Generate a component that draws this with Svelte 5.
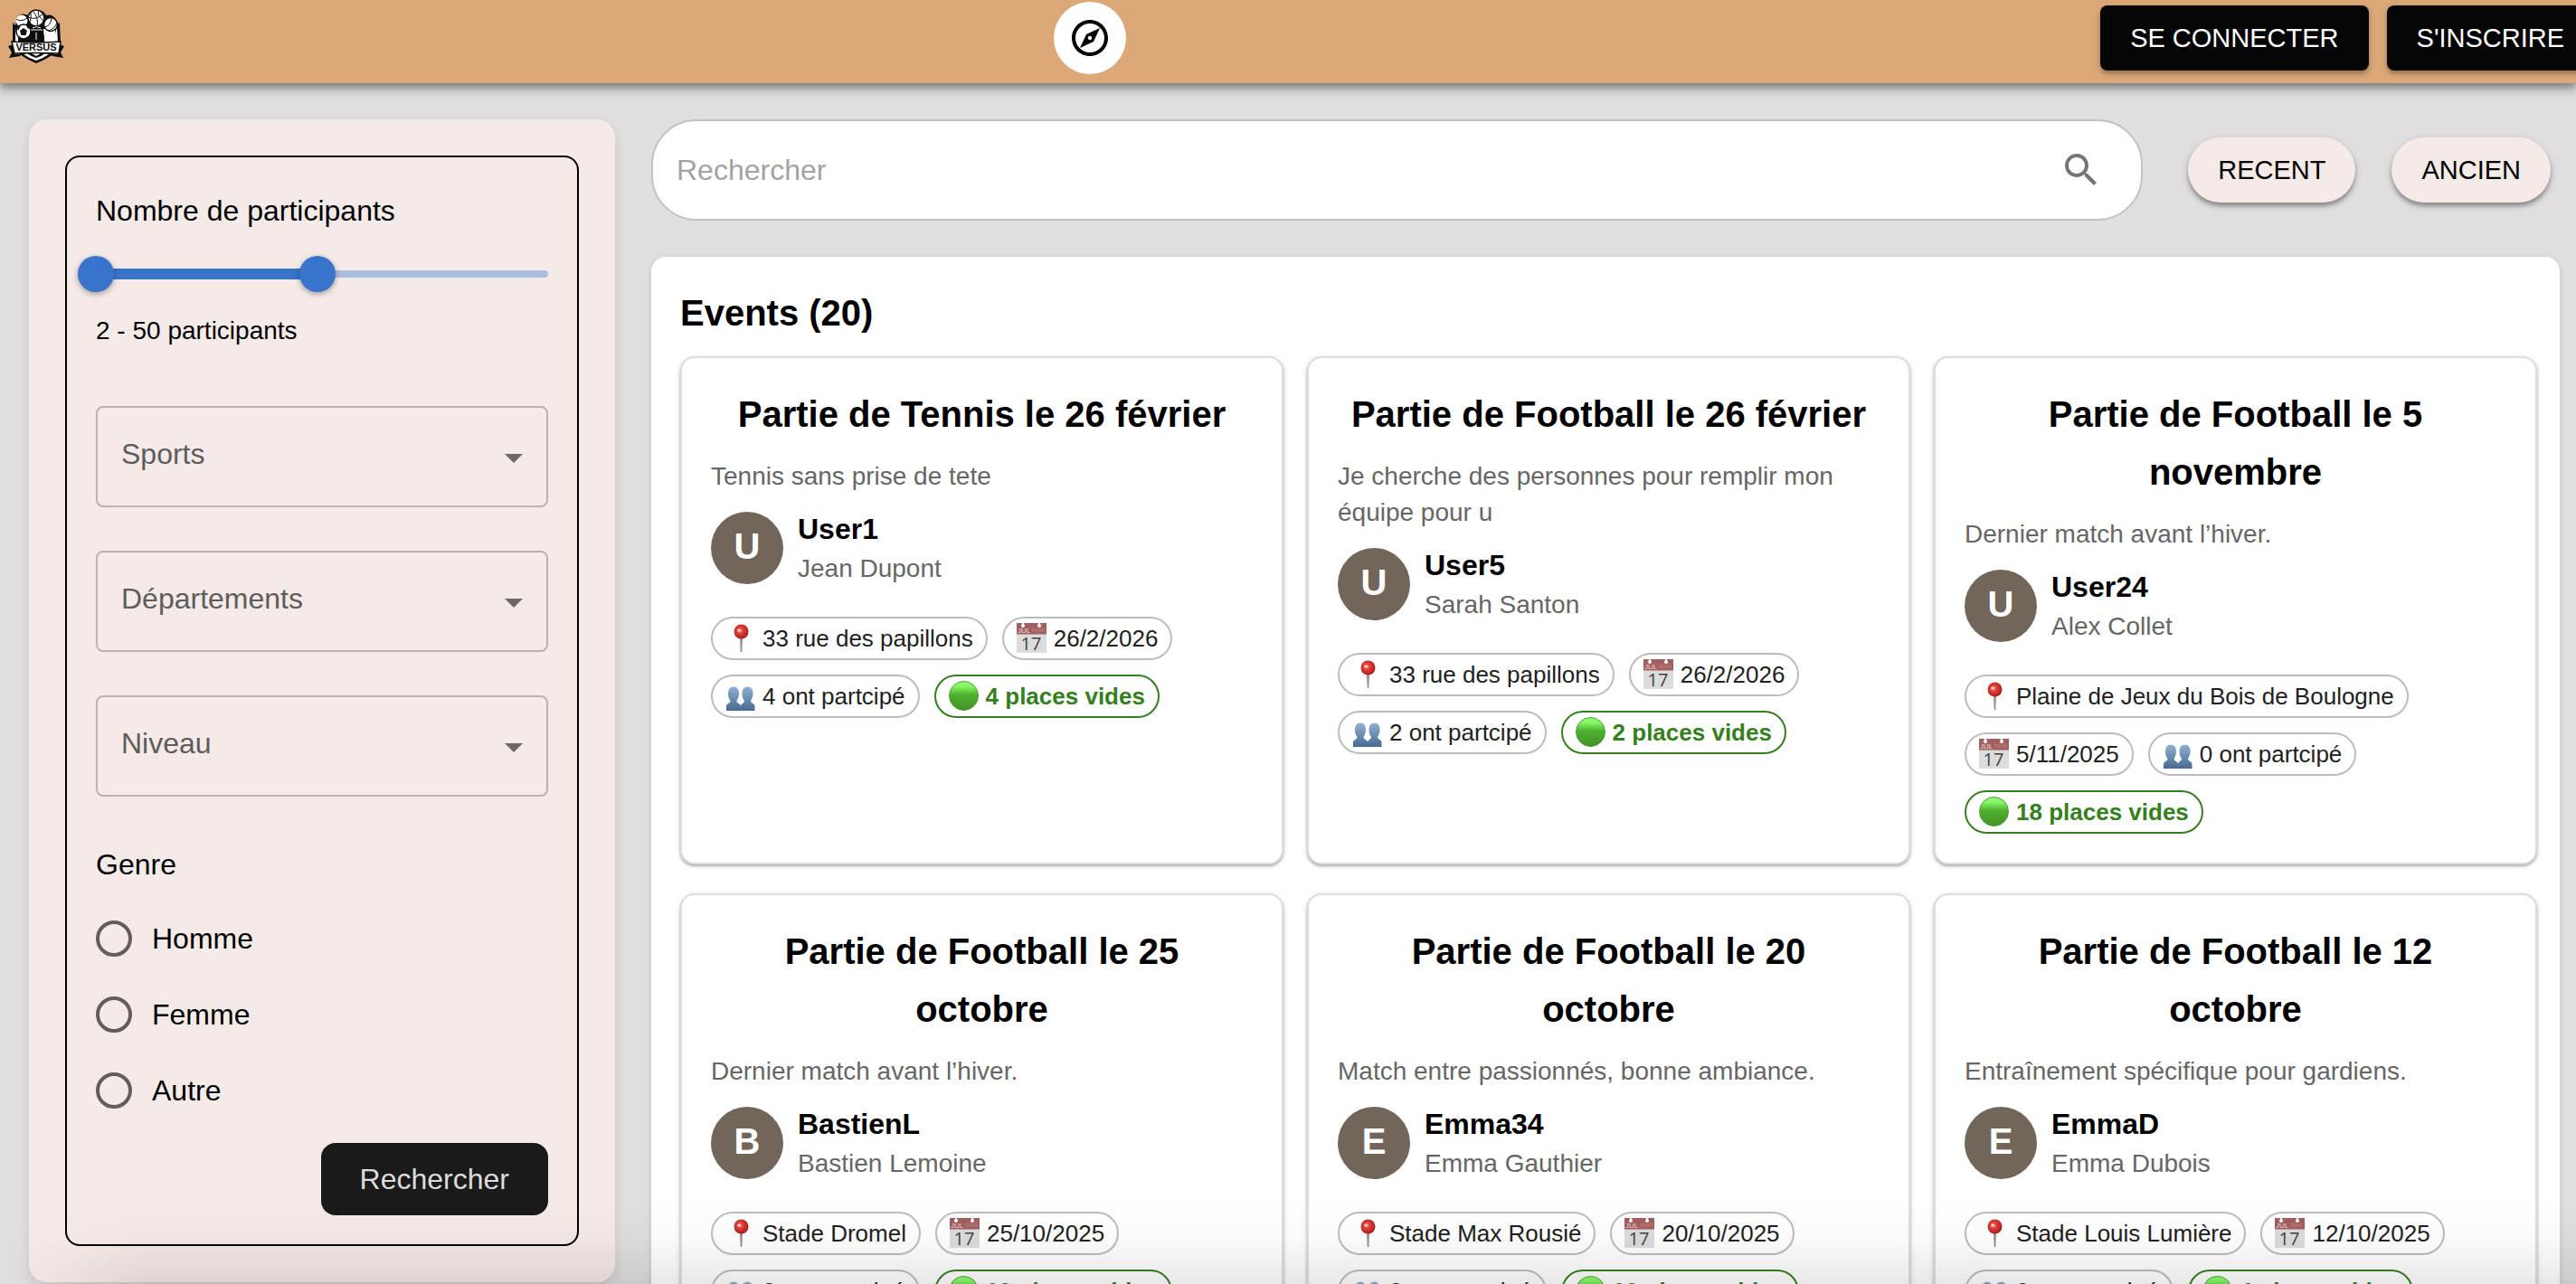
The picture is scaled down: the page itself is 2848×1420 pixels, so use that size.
<script>
  let low = $state(2);
  let high = $state(50);
  let gender = $state('');
  let query = $state('');

  const MIN = 2;
  const MAX = 100;
  const pct = (v) => ((v - MIN) / (MAX - MIN)) * 100;

  const filters = ['Sports', 'Départements', 'Niveau'];
  const genders = ['Homme', 'Femme', 'Autre'];

  const events = [
    { title: 'Partie de Tennis le 26 février', text: 'Tennis sans prise de tete', user: 'User1', name: 'Jean Dupont', place: '33 rue des papillons', date: '26/2/2026', joined: 4, free: 4 },
    { title: 'Partie de Football le 26 février', text: 'Je cherche des personnes pour remplir mon équipe pour u', user: 'User5', name: 'Sarah Santon', place: '33 rue des papillons', date: '26/2/2026', joined: 2, free: 2 },
    { title: 'Partie de Football le 5 novembre', text: 'Dernier match avant l’hiver.', user: 'User24', name: 'Alex Collet', place: 'Plaine de Jeux du Bois de Boulogne', date: '5/11/2025', joined: 0, free: 18 },
    { title: 'Partie de Football le 25 octobre', text: 'Dernier match avant l’hiver.', user: 'BastienL', name: 'Bastien Lemoine', place: 'Stade Dromel', date: '25/10/2025', joined: 0, free: 10 },
    { title: 'Partie de Football le 20 octobre', text: 'Match entre passionnés, bonne ambiance.', user: 'Emma34', name: 'Emma Gauthier', place: 'Stade Max Rousié', date: '20/10/2025', joined: 0, free: 10 },
    { title: 'Partie de Football le 12 octobre', text: 'Entraînement spécifique pour gardiens.', user: 'EmmaD', name: 'Emma Dubois', place: 'Stade Louis Lumière', date: '12/10/2025', joined: 0, free: 4 }
  ];
</script>

<svg class="defs" aria-hidden="true">
  <defs>
    <radialGradient id="pin-red" cx=".42" cy=".42" r=".6">
      <stop offset="0" stop-color="#ff8f83" />
      <stop offset=".35" stop-color="#e2403a" />
      <stop offset="1" stop-color="#a81d1d" />
    </radialGradient>
    <linearGradient id="green-ball" x1="0" y1="0" x2="0" y2="1">
      <stop offset="0" stop-color="#8dfc6c" />
      <stop offset=".18" stop-color="#86f766" />
      <stop offset=".45" stop-color="#4fb12e" />
      <stop offset="1" stop-color="#449227" />
    </linearGradient>
    <linearGradient id="people-blue" x1="0" y1="0" x2="0" y2="1">
      <stop offset="0" stop-color="#8fb0cf" />
      <stop offset="1" stop-color="#486a92" />
    </linearGradient>
  </defs>
</svg>

<header class="topbar">
  <a class="logo" href="#accueil" aria-label="Versus">
    <svg viewBox="0 0 88 80">
      <path d="M14 23 17 26 19 17Q24 11 31 15Q34 9 41 9Q48 9 51 15Q58 13 62 20L63 25 66 23 67 46Q65 58 40 68Q16 58 14 46Z" fill="#0b0d0f" />
      <path d="M17 30Q21 36 20 44H61Q60 36 63 28L64 46H17Z" fill="#fff" />
      <path d="M48 30H61V44H49Z" fill="#fff" />
      <path d="M26 58Q33 63 40 65Q47 63 54 58L50 57Q45 61 40 62Q35 61 30 57Z" fill="#fff" />
      <path d="M35 57H45L40 60Z" fill="#fff" />
      <circle cx="24" cy="21" r="6.500" fill="#fff" />
      <path d="M18 19Q23 23 30 18" fill="none" stroke="#111" stroke-width="1" />
      <circle cx="40" cy="18" r="9" fill="#fff" stroke="#0b0d0f" stroke-width="1.5" />
      <path d="M31 17Q40 21 48 13M36 10Q43 17 41 27M43 9Q40 15 48 21M33 23Q35 16 34 12" fill="none" stroke="#111" stroke-width="1" />
      <circle cx="56" cy="25" r="7.500" fill="#fff" stroke="#0b0d0f" stroke-width="1.5" />
      <path d="M49 28Q56 27 57 18M53 32Q61 30 63 23" fill="none" stroke="#111" stroke-width="1" />
      <circle cx="26" cy="33" r="8" fill="#fff" stroke="#0b0d0f" stroke-width="1.5" />
      <path d="M26 29l4 3-1.500 5h-5l-1.500-5zM19 28l4-2-3 6zM33 28l-4-2 2 4zM20 38l3 1 1 2zM32 38l-3 1-1 2z" fill="#111" />
      <path d="M32 46Q31 31 41 27Q50 31 49 46Z" fill="#0b0d0f" />
      <path d="M36 29Q40 26 45 29M34 31H47M40 34V42" fill="none" stroke="#fff" stroke-width="1" />
      <path d="M9 49 15 47 16 58 24 58 22 60 10 62 13 56ZM71 49 65 47 64 58 56 58 58 60 70 62 67 56Z" fill="#0b0d0f" />
      <path d="M13 44Q40 46 67 44L65 57Q40 56 16 57Z" fill="#fff" stroke="#0b0d0f" stroke-width="1.500" />
      <text x="40" y="54" text-anchor="middle">VERSUS</text>
    </svg>
  </a>
  <a class="explore" href="#explorer" aria-label="Explorer">
    <svg viewBox="0 0 24 24"><path d="M12 2C6.480 2 2 6.480 2 12s4.480 10 10 10 10-4.480 10-10S17.520 2 12 2zm0 18c-4.410 0-8-3.590-8-8s3.590-8 8-8 8 3.590 8 8-3.590 8-8 8zm-5.500-2.500 7.510-3.490L17.500 6.500 9.990 9.990 6.500 17.500zm5.500-6.600c.610 0 1.100.490 1.100 1.100s-.490 1.100-1.100 1.100-1.100-.490-1.100-1.100.490-1.100 1.100-1.100z" /></svg>
  </a>
  <nav class="account">
    <button class="dark">SE CONNECTER</button>
    <button class="dark">S'INSCRIRE</button>
  </nav>
</header>

<main>
  <aside>
    <form class="filters" onsubmit={(e) => e.preventDefault()}>
      <h2>Nombre de participants</h2>
      <div class="slider">
        <div class="rail">
          <div class="active" style="margin-left:{pct(low)}%;width:{pct(high) - pct(low)}%"></div>
        </div>
        <input type="range" min={MIN} max={MAX} bind:value={low} aria-label="Minimum de participants" />
        <input type="range" min={MIN} max={MAX} bind:value={high} aria-label="Maximum de participants" />
      </div>
      <p class="range-text">{low} - {high} participants</p>

      <div class="selects">
        {#each filters as label}
          <div class="select">
            <select aria-label={label}><option>{label}</option></select>
            <svg viewBox="0 0 20 10"><path d="M0 0H20L10 10Z" /></svg>
          </div>
        {/each}
      </div>

      <fieldset>
        <legend>Genre</legend>
        {#each genders as g}
          <label><input type="radio" name="genre" value={g} bind:group={gender} />{g}</label>
        {/each}
      </fieldset>
      <button class="submit" type="submit">Rechercher</button>
    </form>
  </aside>

  <section class="content">
    <div class="tools">
      <div class="search">
        <input type="text" placeholder="Rechercher" aria-label="Rechercher" bind:value={query} />
        <svg viewBox="0 0 24 24"><path d="M15.500 14h-.790l-.280-.270C15.410 12.590 16 11.110 16 9.500 16 5.910 13.090 3 9.500 3S3 5.910 3 9.500 5.910 16 9.500 16c1.610 0 3.090-.590 4.230-1.570l.270.280v.790l5 4.990L20.490 19l-4.990-5zm-6 0C7.010 14 5 11.990 5 9.500S7.010 5 9.500 5 14 7.010 14 9.500 11.990 14 9.500 14z" /></svg>
      </div>
      <button class="sort">RECENT</button>
      <button class="sort">ANCIEN</button>
    </div>

    <div class="panel">
      <h1>Events (20)</h1>
      <div class="grid">
        {#each events as ev}
          <article>
            <h3>{ev.title}</h3>
            <p class="text">{ev.text}</p>
            <div class="host">
              <div class="avatar">{ev.user[0]}</div>
              <div>
                <p class="user">{ev.user}</p>
                <p class="name">{ev.name}</p>
              </div>
            </div>
            <ul>
              <li>
                <svg viewBox="0 0 34 34">
                  <path d="M16 16H19L18.300 32H16.700Z" fill="#9a8f88" />
                  <circle cx="17.500" cy="9.500" r="8" fill="url(#pin-red)" />
                  <ellipse cx="15" cy="8" rx="2" ry="1.500" fill="#fff" opacity=".7" />
                </svg>{ev.place}
              </li>
              <li>
                <svg viewBox="0 0 34 34">
                  <path d="M0 12H33V33H0Z" fill="#dcdcdc" />
                  <path d="M0 0H33V12.500H0Z" fill="#a35f60" />
                  <circle cx="7" cy="3" r="2" fill="#fff" /><circle cx="25" cy="3" r="2" fill="#fff" />
                  <path d="M6 0H8V3H6ZM24 0H26V3H24Z" fill="#fff" />
                  <path d="M18 5.500V10M20 5.500V10M22 5.500V10M24 6.500V10M26 5.500V10M28 5.500V10M30 5.500V10" stroke="#b67e7e" stroke-width="1" />
                  <text class="month" x="1" y="11">JUL</text>
                  <text class="day" x="16" y="30" text-anchor="middle">17</text>
                </svg>{ev.date}
              </li>
              <li>
                <svg viewBox="0 0 34 34">
                  <path fill="url(#people-blue)" d="M9 6.500C13 6.500 15 9.500 15 14C15 18 13.500 20 12.500 22C12.500 25 17 25 17 28V33H1V28C1 25 5.500 25 5.500 22C4 20 3 18 3 14C3 9.500 5 6.500 9 6.500ZM24.500 6.500C28.500 6.500 30.500 9.500 30.500 14C30.500 18 29 20 28 22C28 25 32.500 25 32.500 28V33H17V28C17 25 21 25 21 22C19.500 20 18.500 18 18.500 14C18.500 9.500 20.500 6.500 24.500 6.500Z" />
                </svg>{ev.joined} ont partcipé
              </li>
              <li class="free">
                <svg viewBox="0 0 34 34"><circle cx="16.500" cy="16.500" r="16" fill="url(#green-ball)" stroke="#4da03a" stroke-width="1" /></svg>{ev.free} places vides
              </li>
            </ul>
          </article>
        {/each}
      </div>
    </div>
  </section>
</main>
<div class="fade"></div>

<style>
  :global(body) {
    background: #e0dedf;
    overflow: hidden;
    font-family: 'Liberation Sans', Arial, Helvetica, sans-serif;
    color: #000;
  }
  :global(#app) {
    height: 100vh;
    overflow: hidden;
  }
  * {
    box-sizing: border-box;
  }
  h1, h2, h3, p, ul, fieldset, legend {
    margin: 0;
    padding: 0;
  }
  button, input, select {
    font: inherit;
    margin: 0;
  }
  .defs {
    position: absolute;
    width: 0;
    height: 0;
  }

  .topbar {
    position: relative;
    display: flex;
    justify-content: space-between;
    align-items: center;
    padding: 2px 0 10px;
    background: #dca878;
    box-shadow: 0 4px 8px rgba(0, 0, 0, 0.3), 0 8px 10px rgba(0, 0, 0, 0.14), 0 2px 20px rgba(0, 0, 0, 0.12);
  }
  .logo svg {
    display: block;
    width: 88px;
    height: 80px;
  }
  .logo text {
    font-size: 11px;
    font-weight: 700;
    fill: #0b0d0f;
  }
  .explore {
    display: grid;
    place-items: center;
    width: 80px;
    height: 80px;
    border-radius: 50%;
    background: #fff;
  }
  .explore svg {
    width: 48px;
    height: 48px;
  }
  .account {
    display: flex;
    gap: 20px;
    margin-right: -20px;
  }
  .dark {
    height: 72px;
    padding: 0 33px;
    border: 0;
    border-radius: 8px;
    background: #050505;
    color: #fff;
    font-size: 29px;
    white-space: nowrap;
    box-shadow: 0 4px 4px rgba(0, 0, 0, 0.2), 0 2px 8px rgba(0, 0, 0, 0.14);
  }

  main {
    display: flex;
    align-items: flex-start;
    gap: 40px;
    padding: 40px 18px 0 32px;
  }
  aside {
    flex: 0 0 648px;
    padding: 40px;
    border-radius: 20px;
    background: #f4eae8;
    box-shadow: 0 4px 12px rgba(0, 0, 0, 0.1);
  }
  .filters {
    display: flex;
    flex-direction: column;
    padding: 35px 32px 32px;
    border: 2px solid #000;
    border-radius: 16px;
  }
  h2, legend {
    font-size: 32px;
    font-weight: 400;
    line-height: 48px;
  }
  .slider {
    display: grid;
    align-items: center;
    height: 40px;
    margin-top: 26px;
  }
  .slider > * {
    grid-area: 1 / 1;
  }
  .rail {
    display: flex;
    align-items: center;
    height: 8px;
    border-radius: 4px;
    background: #adbde0;
  }
  .active {
    height: 12px;
    background: #3874cb;
  }
  .slider input {
    appearance: none;
    width: calc(100% + 40px);
    height: 40px;
    margin: 0 -20px;
    background: none;
    pointer-events: none;
  }
  .slider input::-webkit-slider-thumb {
    appearance: none;
    width: 40px;
    height: 40px;
    border-radius: 50%;
    background: #3874cb;
    box-shadow: 0 2px 6px rgba(0, 0, 0, 0.35);
    pointer-events: auto;
  }
  .range-text {
    margin-top: 23px;
    font-size: 28px;
    line-height: 40px;
  }
  .selects {
    display: grid;
    gap: 48px;
    margin-top: 63px;
  }
  .select {
    display: grid;
    align-items: center;
  }
  .select > * {
    grid-area: 1 / 1;
  }
  select {
    appearance: none;
    width: 100%;
    height: 112px;
    padding: 0 64px 6px 26px;
    border: 2px solid #bbb1b1;
    border-radius: 8px;
    background: none;
    color: #5f5c5c;
    font-size: 32px;
  }
  .select svg {
    justify-self: end;
    width: 20px;
    height: 10px;
    margin: 4px 28px 0 0;
    fill: #6d6868;
    pointer-events: none;
  }
  fieldset {
    display: flex;
    flex-direction: column;
    margin-top: 51px;
    border: 0;
    min-width: 0;
  }
  legend {
    margin-bottom: 16px;
  }
  label {
    display: flex;
    align-items: center;
    gap: 22px;
    height: 84px;
    font-size: 32px;
  }
  input[type='radio'] {
    appearance: none;
    width: 40px;
    height: 40px;
    border: 4px solid #625e5e;
    border-radius: 50%;
  }
  input[type='radio']:checked {
    background: radial-gradient(#3874cb 9px, transparent 10px);
    border-color: #3874cb;
  }
  .submit {
    align-self: flex-end;
    height: 80px;
    margin-top: 16px;
    padding: 0 43px;
    border: 0;
    border-radius: 16px;
    background: #1a1a1a;
    color: #dcdcdc;
    font-size: 32px;
  }

  .content {
    flex: 1;
    min-width: 0;
  }
  .tools {
    display: flex;
    align-items: center;
    gap: 40px;
    padding-right: 10px;
  }
  .search {
    flex: 1;
    display: flex;
    align-items: center;
    height: 112px;
    margin-right: 10px;
    padding: 0 42px 0 26px;
    border: 2px solid #c3c2c3;
    border-radius: 50px;
    background: #fff;
  }
  .search input {
    flex: 1;
    min-width: 0;
    padding: 0;
    border: 0;
    outline: 0;
    background: none;
    font-size: 32px;
  }
  .search input::placeholder {
    color: #a2a2a2;
    opacity: 1;
  }
  .search svg {
    width: 48px;
    height: 48px;
    fill: #757575;
  }
  .sort {
    height: 72px;
    padding: 0 33px;
    border: 0;
    border-radius: 36px;
    background: #f4eae8;
    font-size: 29px;
    box-shadow: 0 4px 4px rgba(0, 0, 0, 0.28), 0 3px 10px rgba(0, 0, 0, 0.16);
  }

  .panel {
    margin-top: 40px;
    padding: 30px 25px 64px 32px;
    border-radius: 16px;
    background: #fff;
    box-shadow: 0 2px 6px rgba(0, 0, 0, 0.14);
  }
  h1 {
    margin-bottom: 16px;
    font-size: 40px;
    line-height: 64px;
  }
  .grid {
    display: grid;
    grid-template-columns: repeat(3, minmax(0, 1fr));
    gap: 32px 26px;
  }
  article {
    padding: 30px 32px 32px;
    border: 2px solid #dedede;
    border-radius: 16px;
    background: #fff;
    box-shadow: 0 2px 3px rgba(0, 0, 0, 0.28), 0 1px 6px rgba(0, 0, 0, 0.12);
  }
  h3 {
    padding: 0 8px;
    font-size: 40px;
    line-height: 64px;
    text-align: center;
  }
  .text {
    margin-top: 17px;
    color: #666;
    font-size: 28px;
    line-height: 40px;
  }
  .host {
    display: flex;
    align-items: center;
    gap: 16px;
    margin: 15px 0 32px;
  }
  .avatar {
    display: grid;
    place-items: center;
    width: 80px;
    height: 80px;
    padding-bottom: 4px;
    border-radius: 50%;
    background: #72665a;
    color: #fff;
    font-size: 40px;
    font-weight: 700;
  }
  .user {
    font-size: 32px;
    font-weight: 700;
    line-height: 46px;
  }
  .name {
    color: #666;
    font-size: 28px;
    line-height: 42px;
  }
  ul {
    display: flex;
    flex-wrap: wrap;
    gap: 16px;
    list-style: none;
  }
  li {
    display: flex;
    align-items: center;
    gap: 7px;
    height: 48px;
    padding: 0 14px;
    border: 2px solid #bdbdbd;
    border-radius: 24px;
    color: #212121;
    font-size: 26px;
    white-space: nowrap;
  }
  li svg {
    width: 34px;
    height: 34px;
  }
  .month {
    font-size: 8px;
    fill: #f0dada;
  }
  .day {
    font-family: 'Open Sans', sans-serif;
    font-size: 20px;
    fill: #444;
  }
  .free {
    border-color: #357f20;
    color: #357f20;
    font-weight: 700;
  }
  .fade {
    position: fixed;
    inset: auto 0 0 0;
    height: 90px;
    background: linear-gradient(to bottom, transparent, rgba(0, 0, 0, 0.02) 45%, rgba(0, 0, 0, 0.09));
    mask-image: linear-gradient(to right, transparent, #000 160px);
    pointer-events: none;
  }
</style>
